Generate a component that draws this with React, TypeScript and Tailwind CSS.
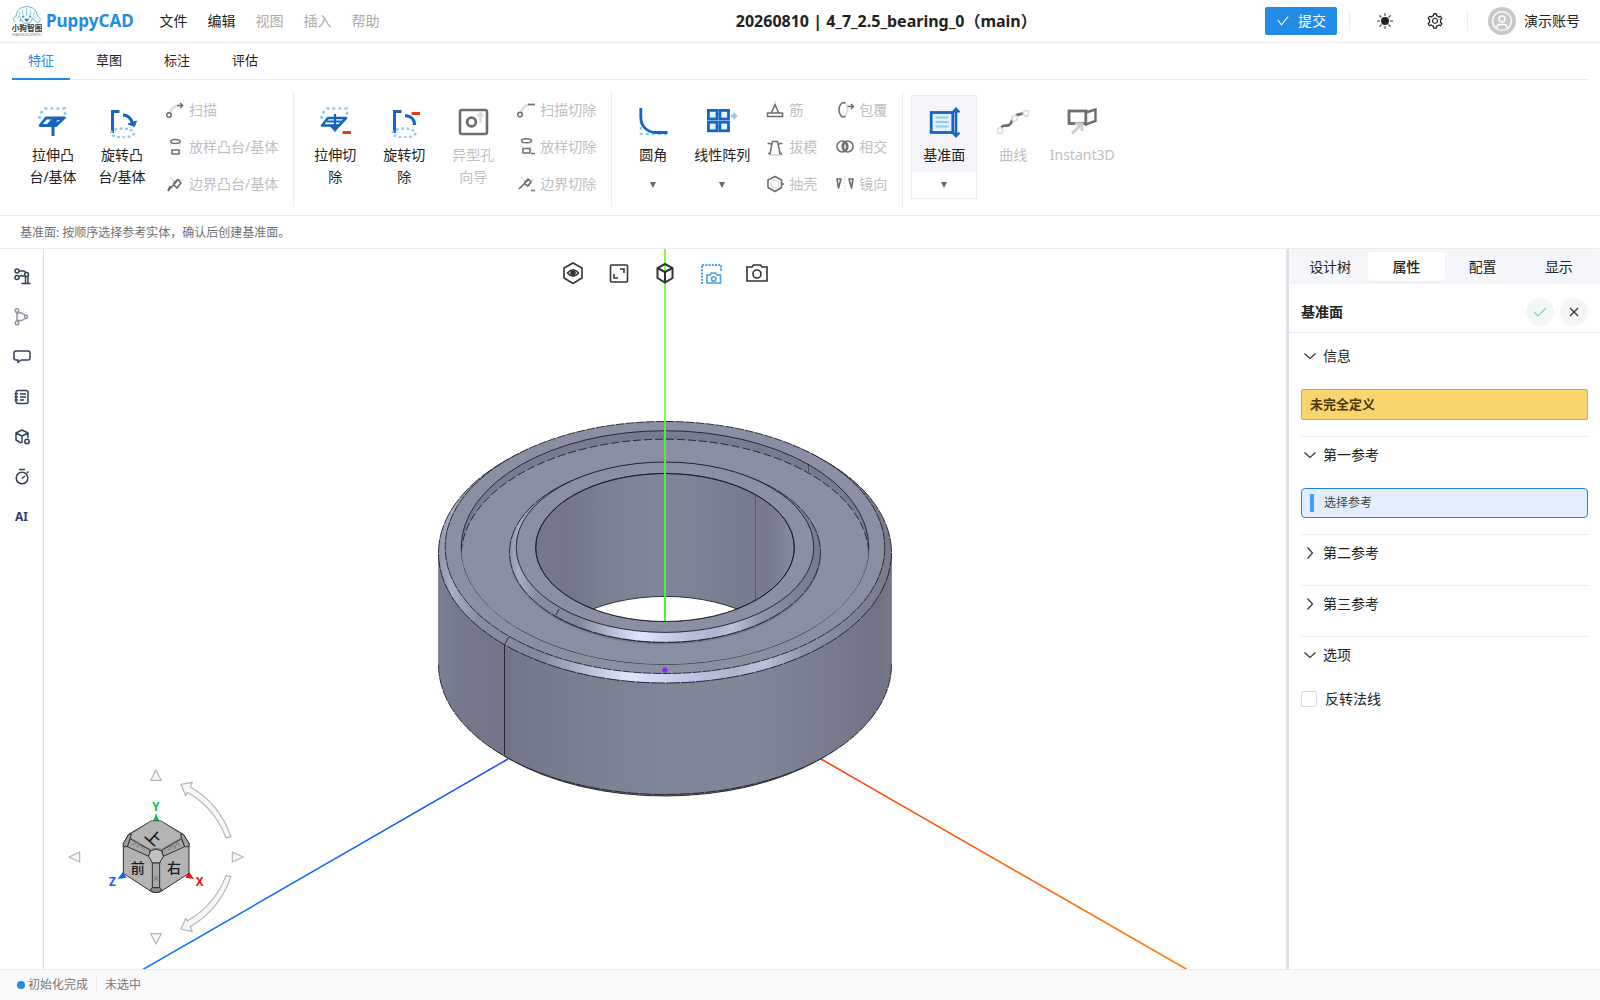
import { useState } from "react"
import type { ReactNode } from "react"
import { AiOutlineCheck, AiOutlineSetting } from "react-icons/ai"
import { BsSunFill } from "react-icons/bs"

const BLUE = "#1565c0"
const SKY = "#90caf9"
const RED = "#d84315"
const GRAY = "#6e6e6e"
const PALE = "#dcdcdc"

/* ---------- icon frames ---------- */

function Big({ children }: { children: ReactNode }) {
  return (
    <svg viewBox="0 0 32 32" className="size-8 shrink-0" fill="none" strokeWidth="2" aria-hidden="true">
      {children}
    </svg>
  )
}

function Small({ children }: { children: ReactNode }) {
  return (
    <svg
      viewBox="0 0 18 18"
      className="size-[18px] shrink-0"
      fill="none"
      stroke={GRAY}
      strokeWidth="1.5"
      strokeLinejoin="round"
      aria-hidden="true"
    >
      {children}
    </svg>
  )
}

/* ---------- large ribbon icons ---------- */

const extrude = (
  <Big>
    <path d="M2.5 13V8.5L8 2.5H28V10" stroke={SKY} strokeWidth="2.6" strokeDasharray="3 3" />
    <path d="M9 12H27L19 19.5H3Z" fill="#fff" stroke={BLUE} strokeWidth="2.8" strokeLinejoin="round" />
    <path d="M10.5 19L17 12H27L19 19.5Z" fill={BLUE} stroke={BLUE} />
    <path d="M16 14V30" stroke={BLUE} strokeWidth="3" />
    <path d="M19 15.5L21 14H23L21 15.5Z" fill="#fff" />
  </Big>
)

const revolve = (
  <Big>
    <path d="M6.5 27V5.5H13.5" stroke={BLUE} strokeWidth="3" />
    <path d="M17 9C22 9 25 13 26.5 17" stroke={BLUE} strokeWidth="3" />
    <path d="M22 18L30.5 15L28.5 20.5Z" fill={BLUE} stroke={BLUE} strokeWidth="1" />
    <ellipse cx="16.5" cy="27" rx="11.5" ry="4.5" stroke={SKY} strokeWidth="2.4" strokeDasharray="2.8 2.4" />
  </Big>
)

const cutExtrude = (
  <Big>
    <path d="M2.5 13V8.5L8 2.5H28V10" stroke={SKY} strokeWidth="2.6" strokeDasharray="3 3" />
    <path d="M9 12H27L20 19.5H3Z" fill="#fff" stroke={BLUE} strokeWidth="2.6" strokeLinejoin="round" />
    <path d="M16 8V24M8 15.5H24" stroke={BLUE} strokeWidth="2.2" />
    <path d="M10.5 19H21.5L16 25.5Z" fill={BLUE} stroke={BLUE} strokeWidth="1" />
    <path d="M23.5 26.5H32" stroke={RED} strokeWidth="3" />
  </Big>
)

const cutRevolve = (
  <Big>
    <path d="M6.5 27V5.5H13.5" stroke={BLUE} strokeWidth="3" />
    <path d="M17 9.5C23 10 26.5 13 26.5 19" stroke={BLUE} strokeWidth="3" />
    <path d="M23.5 7.5H32" stroke={RED} strokeWidth="3" />
    <ellipse cx="16" cy="27" rx="11.5" ry="4.5" stroke={SKY} strokeWidth="2.4" strokeDasharray="2.8 2.4" />
  </Big>
)

const holeWizard = (
  <Big>
    <rect x="3" y="4" width="27" height="24" rx="2" stroke={GRAY} strokeWidth="2.6" />
    <circle cx="14.5" cy="16" r="4.4" stroke={GRAY} strokeWidth="2.8" />
    <path d="M23.5 17V8M20.5 10.5L23.5 7L26.5 10.5" stroke={PALE} strokeWidth="2.4" />
  </Big>
)

const fillet = (
  <Big>
    <path d="M4 3V28H30" stroke={SKY} strokeWidth="2.4" strokeDasharray="3 3" />
    <path d="M3.8 2V11C3.8 20 10 26.5 19 26.5H30.5" stroke={BLUE} strokeWidth="2.8" />
  </Big>
)

const linearPattern = (
  <Big>
    <g fill="#e3f2fd" stroke={BLUE} strokeWidth="2.8">
      <rect x="2.4" y="4.4" width="8.6" height="8.6" />
      <rect x="13.9" y="4.4" width="8.6" height="8.6" />
      <rect x="2.4" y="16.2" width="8.6" height="8.6" />
      <rect x="13.9" y="16.2" width="8.6" height="8.6" />
    </g>
    <path d="M25 10H29" stroke={SKY} strokeWidth="3" />
    <path d="M27.5 6L32 10L27.5 14Z" fill={SKY} />
  </Big>
)

const plane = (
  <Big>
    <rect x="3.2" y="6.5" width="21.6" height="20" fill="#e3f2fd" stroke={BLUE} strokeWidth="2.8" />
    <path d="M7.5 11.5H20.5M7.5 16H20.5M7.5 20.5H20.5" stroke={SKY} strokeWidth="2.2" />
    <path d="M28 3V30" stroke={BLUE} strokeWidth="2.6" />
    <path d="M24 6L28 1.5L32 6ZM24 27L28 31.5L32 27Z" fill={BLUE} stroke={BLUE} strokeWidth="1" />
  </Big>
)

const curve = (
  <Big>
    <path d="M4 23C6 17 9 21 12 19C16 17 14 12 19 10C22 7 25 8 29 7" stroke={GRAY} strokeWidth="2.8" />
    <g fill="#fff" stroke={PALE} strokeWidth="1.6">
      <circle cx="3" cy="24.5" r="2.8" />
      <circle cx="17.7" cy="12.3" r="2.8" />
      <circle cx="29" cy="7.3" r="2.8" />
    </g>
  </Big>
)

const instant = (
  <Big>
    <rect x="3" y="5" width="17" height="12.5" stroke={GRAY} strokeWidth="2.8" />
    <path d="M20 6.5L29.5 3.5V15L20 18.5Z" fill="#fff" stroke={GRAY} strokeWidth="2.4" />
    <path d="M6 27.5L16 18M9 18H16V25" stroke="#cfcfcf" strokeWidth="2.8" />
  </Big>
)

/* ---------- small ribbon icons ---------- */

const sweep = (
  <Small>
    <path d="M4 11C6 7 8 5 12 4.5" stroke={PALE} strokeWidth="2.4" />
    <circle cx="3" cy="14" r="2.3" />
    <path d="M11 4.5H16.5M14 2L16.8 4.5L14 7" />
  </Small>
)

const loft = (
  <Small>
    <path d="M5 5V15M14 5V15" stroke={PALE} strokeDasharray="1.5 1.5" />
    <ellipse cx="9.5" cy="3.5" rx="4.7" ry="2" />
    <path d="M6 16V12H13V16Z" />
  </Small>
)

const boundary = (
  <Small>
    <path d="M4 2L9 7M12 5H17" stroke={PALE} />
    <path d="M2 16L11 6M2 16L4 11M8 8L12 4.5L15 8L11 13L8 10Z" strokeWidth="1.7" />
  </Small>
)

const sweepCut = (
  <Small>
    <path d="M4 11C6 6 8 4 12 3.5" stroke={PALE} strokeWidth="2.4" />
    <circle cx="3" cy="13.5" r="2.3" />
    <path d="M11 3.5H18" strokeWidth="1.7" />
  </Small>
)

const loftCut = (
  <Small>
    <path d="M5 5V14M14 5V12" stroke={PALE} strokeDasharray="1.5 1.5" />
    <ellipse cx="9.5" cy="2.8" rx="5" ry="2" />
    <path d="M6 15V10.5H13V15ZM14 15.5H18" />
  </Small>
)

const boundaryCut = (
  <Small>
    <path d="M4 2L9 7M12 5H17" stroke={PALE} />
    <path d="M2 14L11 5M8 7L11 4L14 7L11 11L8 9ZM14 15.5H18" strokeWidth="1.7" />
  </Small>
)

const rib = (
  <Small>
    <path d="M9 0V3" stroke={PALE} />
    <path d="M5.5 11.5L9 3.5L12.5 11.5M1.5 12H16.5V15.5H1.5Z" strokeWidth="1.6" />
  </Small>
)

const draft = (
  <Small>
    <path d="M3 17H17" stroke={PALE} strokeWidth="2" />
    <path d="M4 15.5L6.5 3.5H11.5L14 15.5M1.5 5.5H4L6 7M16.5 5.5H14L12 7M2 15.5H5M13 15.5H16" strokeWidth="1.5" />
  </Small>
)

const shell = (
  <Small>
    <circle cx="8.8" cy="9" r="4" stroke={PALE} />
    <path d="M9 1.5L15.5 5V12.5L9 16.5L2 12.5V5ZM15.5 9H18" strokeWidth="1.6" />
  </Small>
)

const wrap = (
  <Small>
    <path d="M9 2C12 4 12 13 9 15.5" stroke={PALE} />
    <path d="M9.5 2.2C5.5 0 3 5 3 9C3 13 6 18 9.5 15.2M11.5 5.5H17M15 3L17.5 5.5L15 8" />
  </Small>
)

const intersect = (
  <Small>
    <circle cx="6.4" cy="8.5" r="5.5" />
    <circle cx="11.6" cy="8.5" r="5.5" />
    <path d="M9 3.8Q12.5 8.5 9 13.2Q5.5 8.5 9 3.8Z" fill={PALE} />
  </Small>
)

const mirror = (
  <Small>
    <path d="M9 1V17" stroke={PALE} strokeDasharray="1.5 1.5" />
    <path d="M1 4H5L2.5 13ZM13 4H17L15.5 13Z" strokeWidth="1.6" />
  </Small>
)

/* ---------- ribbon ---------- */

type ToolProps = { icon: ReactNode; label: string; second?: string; disabled?: boolean; menu?: boolean; active?: boolean }

function Tool({ icon, label, second, disabled, menu, active }: ToolProps) {
  return (
    <button
      type="button"
      disabled={disabled}
      className={`flex h-[104px] w-[66px] shrink-0 flex-col items-center border text-sm leading-[22px] whitespace-nowrap ${
        active ? "border-[#ebebf2]" : "border-transparent"
      } ${disabled ? "text-[#c0c0c0]" : "text-[#222]"}`}
    >
      <span className={`flex w-full flex-col items-center gap-1.5 pt-2.5 pb-1.5 ${active ? "bg-[#f5f5f9]" : ""}`}>
        {icon}
        <span className="block text-center">
          {label}
          {second && <br />}
          {second}
        </span>
      </span>
      {menu && (
        <span className="flex flex-1 items-center">
          <svg viewBox="0 0 6 6" className="size-1.5" aria-hidden="true">
            <path d="M0 0H6L3 6Z" fill="#666" />
          </svg>
        </span>
      )}
    </button>
  )
}

function SmallTools({ items }: { items: [ReactNode, string][] }) {
  return (
    <div className="flex flex-col items-start gap-[7px]">
      {items.map(([icon, label]) => (
        <button
          key={label}
          type="button"
          disabled
          className="flex h-[30px] items-center gap-[5px] px-2 text-sm whitespace-nowrap text-[#c0c0c0]"
        >
          {icon}
          {label}
        </button>
      ))}
    </div>
  )
}

function Group({ children, last }: { children: ReactNode; last?: boolean }) {
  return (
    <div className={`flex h-[116px] items-start gap-[3px] py-1 pr-[7px] pl-2 ${last ? "" : "border-r border-[#ebebf2]"}`}>
      {children}
    </div>
  )
}

function Ribbon() {
  return (
    <div className="flex border-b border-[#ececf0] px-3 pt-[11px] pb-2">
      <Group>
        <Tool icon={extrude} label="拉伸凸" second="台/基体" />
        <Tool icon={revolve} label="旋转凸" second="台/基体" />
        <SmallTools
          items={[
            [sweep, "扫描"],
            [loft, "放样凸台/基体"],
            [boundary, "边界凸台/基体"],
          ]}
        />
      </Group>
      <Group>
        <Tool icon={cutExtrude} label="拉伸切" second="除" />
        <Tool icon={cutRevolve} label="旋转切" second="除" />
        <Tool icon={holeWizard} label="异型孔" second="向导" disabled />
        <SmallTools
          items={[
            [sweepCut, "扫描切除"],
            [loftCut, "放样切除"],
            [boundaryCut, "边界切除"],
          ]}
        />
      </Group>
      <Group>
        <Tool icon={fillet} label="圆角" menu />
        <Tool icon={linearPattern} label="线性阵列" menu />
        <SmallTools
          items={[
            [rib, "筋"],
            [draft, "拔模"],
            [shell, "抽壳"],
          ]}
        />
        <SmallTools
          items={[
            [wrap, "包覆"],
            [intersect, "相交"],
            [mirror, "镜向"],
          ]}
        />
      </Group>
      <Group last>
        <Tool icon={plane} label="基准面" menu active />
        <Tool icon={curve} label="曲线" disabled />
        <Tool icon={instant} label="Instant3D" disabled />
      </Group>
    </div>
  )
}

/* ---------- header ---------- */

function Logo() {
  return (
    <svg viewBox="0 0 90 90" className="size-[30px]" fill="none" aria-hidden="true">
      <path
        d="M10 48C0 44 4 34 12 30C14 8 32 2 44 2C58 2 74 8 76 30C86 34 88 46 78 49C72 50 68 46 66 40M22 48C28 46 24 38 26 34M66 40C64 34 60 34 60 42C60 48 52 52 44 52C36 52 30 48 28 40"
        stroke="#64aede"
        strokeWidth="3"
      />
      <path d="M22 18V28M32 10V24L38 32M44 6V30M56 10V24L50 32M66 18V28M14 36L24 30M74 36L64 30" stroke="#7cc4e8" strokeWidth="2.5" />
      <path d="M36 38H52L44 48Z" fill="#2b78c2" />
      <circle cx="33" cy="32" r="3" fill="#3c8ccf" />
      <circle cx="55" cy="32" r="3" fill="#3c8ccf" />
      <text x="45" y="76" textAnchor="middle" fontSize="23" fontWeight="700" fill="#333">
        小狗智图
      </text>
      <text x="45" y="90" textAnchor="middle" fontSize="12" fill="#777">
        XIAOGOUZHITU
      </text>
    </svg>
  )
}

function Header() {
  return (
    <header className="flex h-[43px] items-center border-b border-[#ececf0] pr-5 pl-3">
      <Logo />
      <span className="ml-1 text-[17px] font-bold text-[#228be6]">PuppyCAD</span>
      <nav className="ml-[26px] flex gap-5 text-sm">
        <button type="button">文件</button>
        <button type="button">编辑</button>
        <button type="button" disabled className="text-[#aaa]">
          视图
        </button>
        <button type="button" disabled className="text-[#aaa]">
          插入
        </button>
        <button type="button" disabled className="text-[#aaa]">
          帮助
        </button>
      </nav>
      <h1 className="flex-1 pl-32 text-center text-base font-bold whitespace-nowrap">20260810 | 4_7_2.5_bearing_0（main）</h1>
      <button type="button" className="flex h-7 w-[72px] items-center justify-center gap-2 rounded-xs bg-[#228be6] text-sm text-white">
        <AiOutlineCheck className="size-3.5" />
        提交
      </button>
      <span className="ml-3 h-5 w-px bg-[#ececf0]" />
      <button type="button" aria-label="主题" className="ml-[27px]">
        <BsSunFill className="size-4" />
      </button>
      <button type="button" aria-label="设置" className="ml-[33px]">
        <AiOutlineSetting className="size-[18px]" />
      </button>
      <span className="ml-[23px] h-5 w-px bg-[#ececf0]" />
      <button type="button" className="ml-5 flex items-center gap-2 text-sm">
        <svg viewBox="0 0 28 28" className="size-7" fill="none" stroke="#fff" strokeWidth="1.4" aria-hidden="true">
          <circle cx="14" cy="14" r="14" fill="#c8c8c8" stroke="none" />
          <circle cx="14" cy="14" r="9.4" />
          <circle cx="14" cy="12" r="3" />
          <path d="M9 21V20C9 18 10.5 17.5 12 17.5H16C17.5 17.5 19 18 19 20V21" />
        </svg>
        演示账号
      </button>
    </header>
  )
}

function RibbonTabs() {
  const [current, setCurrent] = useState("特征")
  return (
    <div role="tablist" className="mx-3 flex h-[37px] gap-2.5 border-b border-[#ececf0] text-[13px]">
      {["特征", "草图", "标注", "评估"].map((tab) => (
        <button
          key={tab}
          role="tab"
          type="button"
          aria-selected={tab === current}
          onClick={() => setCurrent(tab)}
          className={`-mb-px border-b-2 px-4 ${
            tab === current ? "border-[#228be6] text-[#228be6]" : "border-transparent"
          }`}
        >
          {tab}
        </button>
      ))}
    </div>
  )
}

/* ---------- left rail ---------- */

const railIcons: [string, ReactNode, boolean?][] = [
  [
    "装配",
    <>
      <circle cx="4" cy="3" r="2" />
      <circle cx="4" cy="9.5" r="2" />
      <circle cx="13.5" cy="6.5" r="2" />
      <path d="M6 3H11L13 4.5M6 9L8 7.5L11.5 8.5M12.5 8.5V15M15 8V15M8.5 15.5H17.5" />
    </>,
  ],
  [
    "分支",
    <>
      <circle cx="4" cy="2.5" r="1.8" />
      <circle cx="4" cy="15" r="1.8" />
      <path d="M4 4.5V13M4.5 5H9L12.5 7.5M4.5 12.5H9L12.5 10" />
      <circle cx="13" cy="8.8" r="1.6" />
    </>,
    true,
  ],
  ["评论", <path d="M3 3H15Q17 3 17 5V10Q17 12 15 12H8L5 14.5V12H3Q1 12 1 10V5Q1 3 3 3Z" />],
  [
    "清单",
    <>
      <rect x="3" y="2.5" width="12" height="13" rx="2" />
      <path d="M7 6H13M7 9H13M7 12H11M1.5 6H5M1.5 9H5M1.5 12H5" />
    </>,
  ],
  [
    "零件",
    <>
      <path d="M9 2L15 5V10M9 2L3 5V12L8 15M3 5L9 8L15 5M9 8V15" />
      <circle cx="14" cy="13.5" r="2.2" />
    </>,
  ],
  [
    "历史",
    <>
      <circle cx="9" cy="10" r="5.8" />
      <path d="M6 1.5H12M9 10.5L12 8M14 5L15.5 3.5" />
    </>,
  ],
]

function Rail() {
  return (
    <aside className="flex w-11 shrink-0 flex-col items-center border-r border-[#d8dfe8] pt-2 text-[#33415c]">
      {railIcons.map(([label, drawing, muted]) => (
        <button key={label} type="button" aria-label={label} className="flex size-10 items-center justify-center">
          <svg
            viewBox="0 0 18 18"
            className={`size-[18px] ${muted ? "opacity-55" : ""}`}
            fill="none"
            stroke="currentColor"
            strokeWidth="1.5"
            strokeLinejoin="round"
            aria-hidden="true"
          >
            {drawing}
          </svg>
        </button>
      ))}
      <button type="button" className="flex size-10 items-center justify-center text-xs font-bold">
        AI
      </button>
    </aside>
  )
}

/* ---------- viewport ---------- */

function Bearing() {
  return (
    <svg
      viewBox="44 249 1242 720"
      className="absolute inset-0 size-full"
      preserveAspectRatio="xMidYMid slice"
      fill="none"
      role="img"
      aria-label="轴承模型"
    >
      <defs>
        <linearGradient id="side" gradientUnits="userSpaceOnUse" x1="438" x2="892" y1="0" y2="0">
          <stop offset="0" stopColor="#7c8094" />
          <stop offset=".05" stopColor="#75788b" />
          <stop offset=".15" stopColor="#727588" />
          <stop offset=".3" stopColor="#797d90" />
          <stop offset=".5" stopColor="#808699" />
          <stop offset=".7" stopColor="#808597" />
          <stop offset=".88" stopColor="#767a8c" />
          <stop offset=".96" stopColor="#6f7284" />
          <stop offset="1" stopColor="#747788" />
        </linearGradient>
        <linearGradient id="chamfer" x1="0" x2="1" y1="0" y2="0">
          <stop offset="0" stopColor="#9195ad" />
          <stop offset=".03" stopColor="#a9aec8" />
          <stop offset=".09" stopColor="#888ca0" />
          <stop offset=".22" stopColor="#83879a" />
          <stop offset=".33" stopColor="#b8bed8" />
          <stop offset=".42" stopColor="#e0e6ff" />
          <stop offset=".53" stopColor="#c4cae6" />
          <stop offset=".65" stopColor="#aeb4ce" />
          <stop offset=".72" stopColor="#bcc1dd" />
          <stop offset=".8" stopColor="#9095ab" />
          <stop offset=".92" stopColor="#7d8194" />
          <stop offset="1" stopColor="#777a8c" />
        </linearGradient>
        <linearGradient id="bore" x1="0" x2="1" y1="0" y2="0">
          <stop offset="0" stopColor="#757889" />
          <stop offset=".12" stopColor="#727588" />
          <stop offset=".28" stopColor="#7c8093" />
          <stop offset=".5" stopColor="#808699" />
          <stop offset=".75" stopColor="#797d90" />
          <stop offset=".9" stopColor="#76798b" />
          <stop offset="1" stopColor="#888ca1" />
        </linearGradient>
        <linearGradient id="zAxis" gradientUnits="userSpaceOnUse" x1="508" y1="759" x2="143" y2="969">
          <stop stopColor="#0a50ff" />
          <stop offset="1" stopColor="#0a7cff" />
        </linearGradient>
        <linearGradient id="xAxis" gradientUnits="userSpaceOnUse" x1="821" y1="759" x2="1187" y2="969">
          <stop stopColor="#ff3c00" />
          <stop offset="1" stopColor="#ff7a00" />
        </linearGradient>
        <clipPath id="rim">
          <ellipse cx="665" cy="547.5" rx="203.8" ry="116.8" />
        </clipPath>
        <clipPath id="hole">
          <ellipse cx="665" cy="547.5" rx="129.3" ry="74" />
        </clipPath>
      </defs>

      {/* ground axes */}
      <path d="M508 759L143 969.5" stroke="url(#zAxis)" strokeWidth="1.5" />
      <path d="M821 759L1187 969.5" stroke="url(#xAxis)" strokeWidth="1.5" />

      <g stroke="#1d1e24" strokeWidth=".9">
        {/* outer ring */}
        <ellipse cx="665" cy="670" rx="219.8" ry="126" fill="#72768a" />
        <path d="M438.5 553V664.5A226.5 130 0 0 0 891.5 664.5V553Z" fill="url(#side)" stroke="none" />
        <path d="M438.5 664.5A226.5 130 0 0 0 891.5 664.5" strokeDasharray="12 1" />
        <path d="M438.5 553V664.5M891.5 553V664.5" strokeOpacity=".35" />
        <ellipse cx="665" cy="553" rx="226.5" ry="130" fill="url(#chamfer)" strokeDasharray="14 1" />
        <ellipse cx="665" cy="547.5" rx="219.8" ry="126" fill="#8b8fa3" strokeDasharray="9 1" />

        {/* groove between the rings */}
        <ellipse cx="665" cy="547.5" rx="203.8" ry="116.8" fill="#777b8e" />
        <g clipPath="url(#rim)">
          <ellipse cx="665" cy="556" rx="203.8" ry="116.8" fill="#8b8fa3" strokeDasharray="8 3" />
        </g>
        <path d="M808.5 464V472" strokeOpacity=".5" />

        {/* inner ring */}
        <ellipse cx="665" cy="555" rx="155.5" ry="89.5" fill="#777b8e" stroke="none" />
        <path d="M554 616A155.5 89.5 0 0 0 780 613" strokeOpacity=".7" />
        <ellipse cx="665" cy="552.5" rx="155.5" ry="89.8" fill="url(#chamfer)" strokeDasharray="14 1" />
        <ellipse cx="665" cy="547.2" rx="148.8" ry="85.2" fill="#8b8fa3" />
        <ellipse cx="665" cy="547.5" rx="129.3" ry="74" fill="url(#bore)" />
        <g clipPath="url(#hole)">
          <ellipse cx="665" cy="670.4" rx="129.3" ry="74" fill="#fff" />
        </g>
        <ellipse cx="665" cy="547.5" rx="129.3" ry="74" />

        {/* seams */}
        <path d="M504.5 645V755M508.5 637L505 644M559 609L556 615" />
        <path d="M755.5 496V600" strokeOpacity=".4" />
      </g>

      <path d="M665 249V421" stroke="#84ff3d" strokeWidth="2" />
      <path d="M665 421V621" stroke="#4cf03c" strokeWidth="2" />
      <circle cx="665" cy="670" r="2.6" fill="#8a2be2" />
    </svg>
  )
}

function ViewCube() {
  return (
    <svg viewBox="54 57 528 528" className="absolute bottom-6 left-6 size-44" fill="none" role="img" aria-label="视图方向">
      <g fill="#f7f7f7" stroke="#b4b4b4" strokeWidth="3.5" strokeLinejoin="round">
        <path d="M317 60L302 91H334Z" />
        <path d="M57 321L89 306V336Z" />
        <path d="M580 321L547 306V336Z" />
        <path d="M318 582L302 551H334Z" />
        <path d="M393 103L427 97L421 111Q508 160 543 260L528 264Q495 175 412 127L407 137Z" />
        <path d="M393 537L427 545L421 530Q508 480 543 380L528 377Q495 465 412 513L407 505Z" />
      </g>
      <path d="M309 214L318 190L328 214Z" fill="#00c853" />
      <path d="M203 387L218 367L230 383Z" fill="#0a64ff" />
      <path d="M432 387L417 366L406 383Z" fill="#f01010" />
      <g fill="#b4b4b4" stroke="#303030" strokeWidth="3" strokeLinejoin="round">
        <path d="M220 280L236 253L303 213H333L400 253L417 280V370L330 426H306L220 370Z" />
        <path d="M243 252L303 213H333L393 252L392 264L335 298L318 295L300 298L242 264Z" stroke="#555" strokeWidth="1.5" />
        <path d="M232 290L240 266L301 301L296 319Z" fill="#a6a6a6" />
        <path d="M404 290L395 266L335 301L340 319Z" fill="#a6a6a6" />
        <path d="M220 280L236 253L244 252L240 266L232 290H220Z" fill="#a0a0a0" />
        <path d="M417 280L400 253L392 252L395 266L404 290H417Z" fill="#a0a0a0" />
        <path d="M301 303L318 297L335 303L340 319L329 339H307L296 319Z" fill="#c2c2c2" />
        <path d="M307 339H329V413H307Z" fill="#a6a6a6" />
        <path d="M307 413H329L336 420L326 427H310L300 420Z" fill="#8c8c8c" />
      </g>
      <path
        d="M247 284L266 276L262 292M264 280L284 298M356 300L368 282L374 296L382 276L388 288M310 378L326 392M310 392L326 380"
        stroke="#777"
        strokeWidth="3"
      />
      <g fontWeight="500" fill="#1a1a1a" textAnchor="middle">
        <text x="263" y="368" fontSize="42">
          前
        </text>
        <text x="372" y="370" fontSize="42">
          右
        </text>
        <text x="0" y="16" fontSize="46" transform="translate(310 263) rotate(42)">
          上
        </text>
      </g>
      <g fontSize="35" fontWeight="700" textAnchor="middle">
        <text x="318" y="182" fill="#00c853">
          Y
        </text>
        <text x="187" y="409" fill="#0a64ff">
          Z
        </text>
        <text x="449" y="409" fill="#f01010">
          X
        </text>
      </g>
    </svg>
  )
}

const viewTools: [string, ReactNode][] = [
  [
    "显示样式",
    <>
      <path d="M11 1L20 6V16L11 21.5L2 16V6Z" />
      <path d="M5.5 11Q11 4.5 16.5 11Q11 17.5 5.5 11Z" />
      <circle cx="11" cy="11" r="2" fill="#333" />
    </>,
  ],
  [
    "适合窗口",
    <>
      <rect x="2.5" y="3" width="17" height="17" rx="1" />
      <path d="M12 7H16V11M6 12V16H10" />
    </>,
  ],
  ["等轴测", <path d="M11 2L18.5 6V16L11 20.5L3.5 16V6ZM3.5 6L11 10L18.5 6M11 10V20" strokeWidth="2" />],
  [
    "区域截图",
    <g stroke="#4a9fe8">
      <path d="M2 22V3H21V10" strokeWidth="2" strokeDasharray="2 1.2" />
      <path d="M7 13H10L11.5 11H15.5L17 13H20.5V21H7Z" />
      <circle cx="13.7" cy="17" r="2.2" />
    </g>,
  ],
  [
    "截图",
    <>
      <path d="M1 5H6L7.5 3H14.5L16 5H21V19H1Z" />
      <circle cx="11" cy="12" r="4" />
    </>,
  ],
]

function Viewport() {
  return (
    <main className="relative min-w-0 flex-1 overflow-hidden bg-white">
      <Bearing />
      <div className="absolute inset-x-0 top-[13px] flex justify-center gap-6">
        {viewTools.map(([label, drawing]) => (
          <button key={label} type="button" aria-label={label}>
            <svg viewBox="0 0 22 22" className="size-[22px]" fill="none" stroke="#333" strokeWidth="1.6" aria-hidden="true">
              {drawing}
            </svg>
          </button>
        ))}
      </div>
      <ViewCube />
    </main>
  )
}

/* ---------- property panel ---------- */

type SectionProps = { title: string; children?: ReactNode; first?: boolean }

function Section({ title, children, first }: SectionProps) {
  return (
    <section className={`${first ? "" : "border-t border-[#ebebf2]"} ${children ? "pb-4" : "pb-[15px]"}`}>
      <button type="button" aria-expanded={!!children} className="flex h-[35px] w-full items-center gap-[5px] pl-px text-sm">
        <svg viewBox="0 0 16 16" className="size-4" fill="none" stroke="#333" strokeWidth="1.2" aria-hidden="true">
          <path d={children ? "M2.5 5.5L8 10.5L13.5 5.5" : "M5.5 2.5L10.5 8L5.5 13.5"} />
        </svg>
        {title}
      </button>
      {children && <div className="pt-4">{children}</div>}
    </section>
  )
}

function Properties() {
  const [flip, setFlip] = useState(false)
  return (
    <aside className="w-[314px] shrink-0 border-l-3 border-[#dfdfe8]">
      <div role="tablist" className="flex h-[35px] rounded bg-[#f5f6f9] p-[3px] text-sm">
        {["设计树", "属性", "配置", "显示"].map((tab) => (
          <button
            key={tab}
            role="tab"
            type="button"
            aria-selected={tab === "属性"}
            className={`flex-1 rounded ${tab === "属性" ? "bg-white font-medium shadow-xs" : ""}`}
          >
            {tab}
          </button>
        ))}
      </div>
      <div className="flex h-[49px] items-center gap-1.5 border-b border-[#ebebf2] px-3 pt-2">
        <h2 className="flex-1 text-sm font-semibold">基准面</h2>
        <button type="button" aria-label="确定" className="flex size-7 items-center justify-center rounded-full bg-[#f4f6f6]">
          <svg viewBox="0 0 14 14" className="size-3.5" fill="none" stroke="#6fdcb0" strokeWidth="1.2" aria-hidden="true">
            <path d="M1 7L5 11L13 3" />
          </svg>
        </button>
        <button type="button" aria-label="取消" className="flex size-7 items-center justify-center rounded-full bg-[#f4f6f6]">
          <svg viewBox="0 0 14 14" className="size-3.5" fill="none" stroke="#333" strokeWidth="1.3" aria-hidden="true">
            <path d="M3 3L11 11M11 3L3 11" />
          </svg>
        </button>
      </div>
      <div className="px-3 pt-[5px]">
        <Section title="信息" first>
          <p className="flex h-[31px] items-center rounded-xs border border-[#ccab50] bg-[#f8d56e] px-2 text-[13px] font-bold text-[#4a3a08]">
            未完全定义
          </p>
        </Section>
        <Section title="第一参考">
          <button
            type="button"
            className="flex h-[30px] w-full items-center gap-2.5 rounded border border-[#2480e8] bg-[#e2eefc] px-2 text-xs text-[#444]"
          >
            <span className="h-[18px] w-1 bg-[#3aa0ff]" />
            选择参考
          </button>
        </Section>
        <Section title="第二参考" />
        <Section title="第三参考" />
        <Section title="选项">
          <label className="flex h-[22px] items-center gap-2 text-sm">
            <input
              type="checkbox"
              checked={flip}
              onChange={(e) => setFlip(e.target.checked)}
              className="size-4 appearance-none rounded-xs border border-[#dcdce4] checked:bg-[#228be6]"
            />
            反转法线
          </label>
        </Section>
      </div>
    </aside>
  )
}

export default function App() {
  return (
    <div className="flex min-h-screen flex-col bg-white font-['Noto_Sans','Noto_Sans_CJK_SC',sans-serif] text-[#222]">
      <Header />
      <RibbonTabs />
      <Ribbon />
      <p className="flex h-[33px] items-center border-b border-[#ececf0] px-5 pt-0.5 text-xs text-[#707070]">
        基准面: 按顺序选择参考实体，确认后创建基准面。
      </p>
      <div className="flex flex-1">
        <Rail />
        <Viewport />
        <Properties />
      </div>
      <footer className="flex h-[31px] items-center border-t border-[#ececf0] bg-[#fafafc] px-[17px] text-xs text-[#777]">
        <span className="mr-[3px] size-2 rounded-full bg-[#228be6]" />
        初始化完成
        <span className="mx-2 h-4 w-px bg-[#e6e6ee]" />
        未选中
      </footer>
    </div>
  )
}
